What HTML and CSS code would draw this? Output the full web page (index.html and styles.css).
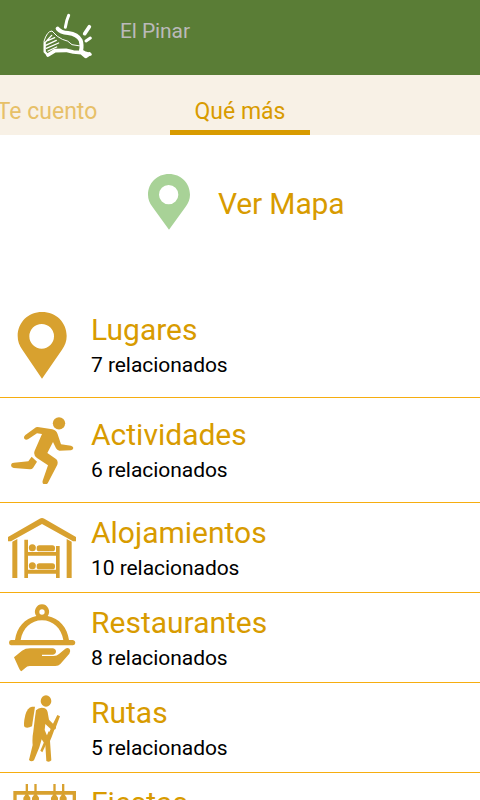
FILE: index.html
```
<!DOCTYPE html>
<html lang="es">
<head>
    <meta charset="UTF-8">
    <meta name="viewport" content="width=device-width, initial-scale=1.0">
    <title>El Pinar</title>
    <link rel="stylesheet" href="styles.css">
</head>
<body>
    <!-- Header -->
    <header class="header">
        <svg class="logo" viewBox="0 0 225 195">
            <g fill="none" stroke="#fff" stroke-linecap="round" stroke-linejoin="round">
                <path stroke-width="9" d="M116 31Q109 46 106 67"/>
                <path stroke-width="11" d="M178 65L164 86"/>
                <path stroke-width="9" d="M181 99L168 108"/>
                <path stroke-width="12" d="M83 71Q92 82 114 84Q143 88 152 106Q157 120 153 139"/>
                <path stroke-width="3" d="M42 109Q51 78 66 78Q82 97 97 103Q115 106 126 119L151 123"/>
                <path stroke-width="7" d="M44 113V140L53 150"/>
                <path stroke-width="4" d="M47 111L65 91M47 121L79 106M49 130L86 114M54 138L80 126M53 107L74 98"/>
                <path stroke-width="11" d="M54 150L75 137L108 136L130 141L154 143L167 154L178 147"/>
                <path stroke-width="9" d="M152 137L164 143L181 148"/>
            </g>
        </svg>
        <h1 class="header-title">El Pinar</h1>
    </header>

    <!-- Tabs -->
    <nav class="tabs">
        <a class="tab">Te cuento</a>
        <a class="tab active">Qué más</a>
    </nav>

    <!-- Map link -->
    <div class="map-link">
        <svg class="map-pin" viewBox="0 0 126 168">
            <path fill="#a8d297" fill-rule="evenodd" d="M63 0C27 0 0 27 0 62C0 76 5 87 12 97L63 167L114 97C121 87 126 76 126 62C126 27 99 0 63 0ZM62 33A29 29 0 1 1 62 91A29 29 0 1 1 62 33Z"/>
        </svg>
        <span>Ver Mapa</span>
    </div>

    <!-- Related categories -->
    <div class="list">
        <div class="item tall">
            <svg class="icon" viewBox="24 33 204 204">
                <path fill-rule="evenodd" d="M126 36C85 36 53 67 53 108C53 124 58 137 67 149L126 236L186 149C195 137 200 124 200 108C200 67 168 36 126 36ZM125 72A37 37 0 1 1 125 146A37 37 0 1 1 125 72Z"/>
            </svg>
            <div>
                <div class="name">Lugares</div>
                <div class="count">7 relacionados</div>
            </div>
        </div>
        <div class="item tall">
            <svg class="icon" viewBox="24 33 204 204">
                <circle cx="177" cy="55" r="18.500"/>
                <path d="M108 67Q112 65 118 67L157 73Q170 76 173 88L183 118L213 122Q220 124 220 129Q219 135 213 136L178 137Q171 136 168 130L159 111L142 144L169 163Q175 169 172 179L144 233Q139 241 132 238Q126 235 128 227L144 181L111 159Q99 151 104 137L126 87L111 85L84 103Q77 106 73 101Q70 95 76 90Z"/>
                <path d="M95 155L111 170L99 189Q96 193 90 193L41 189Q33 187 33 180Q34 173 42 173L85 169Z"/>
            </svg>
            <div>
                <div class="name">Actividades</div>
                <div class="count">6 relacionados</div>
            </div>
        </div>
        <div class="item">
            <svg class="icon" viewBox="24 27 204 204">
                <path d="M24 96L119 41Q126 37 133 41L228 96V109H219L126 57L33 109H24ZM37 110L52 102V219H37ZM200 102L215 110V219H200Z"/>
                <path d="M73 104H84V141H168V123H179V219H168V206H84V219H73ZM84 152V194H168V152Z" fill-rule="evenodd"/>
                <circle cx="97" cy="128" r="10.500"/>
                <rect x="110" y="121" width="55" height="18" rx="8"/>
                <circle cx="97" cy="182" r="10.500"/>
                <rect x="110" y="175" width="55" height="18" rx="8"/>
            </svg>
            <div>
                <div class="name">Alojamientos</div>
                <div class="count">10 relacionados</div>
            </div>
        </div>
        <div class="item">
            <svg class="icon" viewBox="24 27 204 204">
                <path fill-rule="evenodd" d="M126 28A22 22 0 0 1 143 63C178 70 202 98 207 135H219Q226 137 226 143Q226 150 219 151H33Q27 150 27 143Q27 136 33 135H45C50 98 74 70 109 63A22 22 0 0 1 126 28ZM126 43A8 8 0 1 0 126 59A8 8 0 1 0 126 43ZM62 135H190C184 100 159 76 126 76S68 100 62 135Z"/>
                <path d="M42 187L66 167Q76 160 91 160H159Q168 162 168 170Q167 178 158 179H126V183H161Q171 183 177 177L196 161Q203 156 209 162Q213 168 208 176L181 207Q176 213 166 213H89Q81 213 75 220L64 229Q60 227 57 220Z"/>
            </svg>
            <div>
                <div class="name">Restaurantes</div>
                <div class="count">8 relacionados</div>
            </div>
        </div>
        <div class="item">
            <svg class="icon" viewBox="24 27 204 204">
                <ellipse cx="138" cy="48" rx="16" ry="17.500"/>
                <path d="M105 65L96 124Q82 131 74 126Q69 120 76 90Q82 67 96 65Z"/>
                <path d="M108 76Q118 65 132 69Q143 72 144 88L147 104L159 116L172 90L180 94L168 125Q169 133 163 134L155 156L150 168L154 226Q148 233 139 228L136 180L125 163L118 187L102 226Q94 232 87 225L98 180Q96 160 100 139L105 97ZM136 117L134 135L142 154L152 132Z" fill-rule="evenodd"/>
                <path d="M154 145L127 202L121 197L146 139Z"/>
            </svg>
            <div>
                <div class="name">Rutas</div>
                <div class="count">5 relacionados</div>
            </div>
        </div>
        <div class="item">
            <svg class="icon" viewBox="24 297 204 204">
                <path d="M40 318H228V420H218V329H50V420H40Z"/>
                <path d="M77 297H84V328L91 338V350H70V338L77 328ZM103 297H110V328L117 338V350H96V338L103 328ZM160 297H167V328L174 338V350H153V338L160 328ZM186 297H193V328L200 338V350H179V338L186 328Z"/>
            </svg>
            <div>
                <div class="name">Fiestas</div>
                <div class="count">3 relacionados</div>
            </div>
        </div>
    </div>
</body>
</html>
```

FILE: styles.css
```
body {
    font-family: Roboto, sans-serif;
    margin: 0;
    padding: 0;
    height: 800px;
    overflow: hidden;
    background-color: #fff;
}
.header {
    display: flex;
    height: 70px;
    padding: 5px 0 0 30px;
    background-color: #5a7d36;
}
.logo {
    width: 75px;
    height: 65px;
}
.header-title {
    margin: 11px 0 0 15px;
    font-size: 21px;
    font-weight: normal;
    line-height: 30px;
    letter-spacing: -0.1px;
    color: #bababa;
}
.tabs {
    display: flex;
    height: 60px;
    background-color: #f8f1e6;
}
.tab {
    box-sizing: border-box;
    width: 140px;
    margin-left: -23px;
    padding-top: 19px;
    font-size: 23px;
    line-height: 36px;
    text-align: center;
    white-space: nowrap;
    color: #e7c068;
}
.tab.active {
    margin-left: 53px;
    border-bottom: 5px solid #d89b00;
    color: #d89b00;
}
.map-link {
    display: flex;
    height: 119px;
    padding: 39px 0 0 148px;
    font-size: 30px;
    line-height: 60px;
    letter-spacing: -0.15px;
    color: #d89b00;
}
.map-pin {
    width: 42px;
    height: 56px;
    margin-right: 28px;
}
.item {
    display: flex;
    box-sizing: border-box;
    height: 90px;
    padding: 11px 8px 0;
    border-bottom: 1px solid #f6ad10;
}
.item.tall {
    height: 105px;
    padding-top: 18px;
}
.icon {
    width: 68px;
    height: 68px;
    margin-right: 15px;
    fill: #d8a12f;
}
.name {
    font-size: 30px;
    line-height: 38px;
    color: #d89b00;
}
.count {
    font-size: 21px;
    line-height: 33px;
    letter-spacing: -0.05px;
    color: #000;
}
```
